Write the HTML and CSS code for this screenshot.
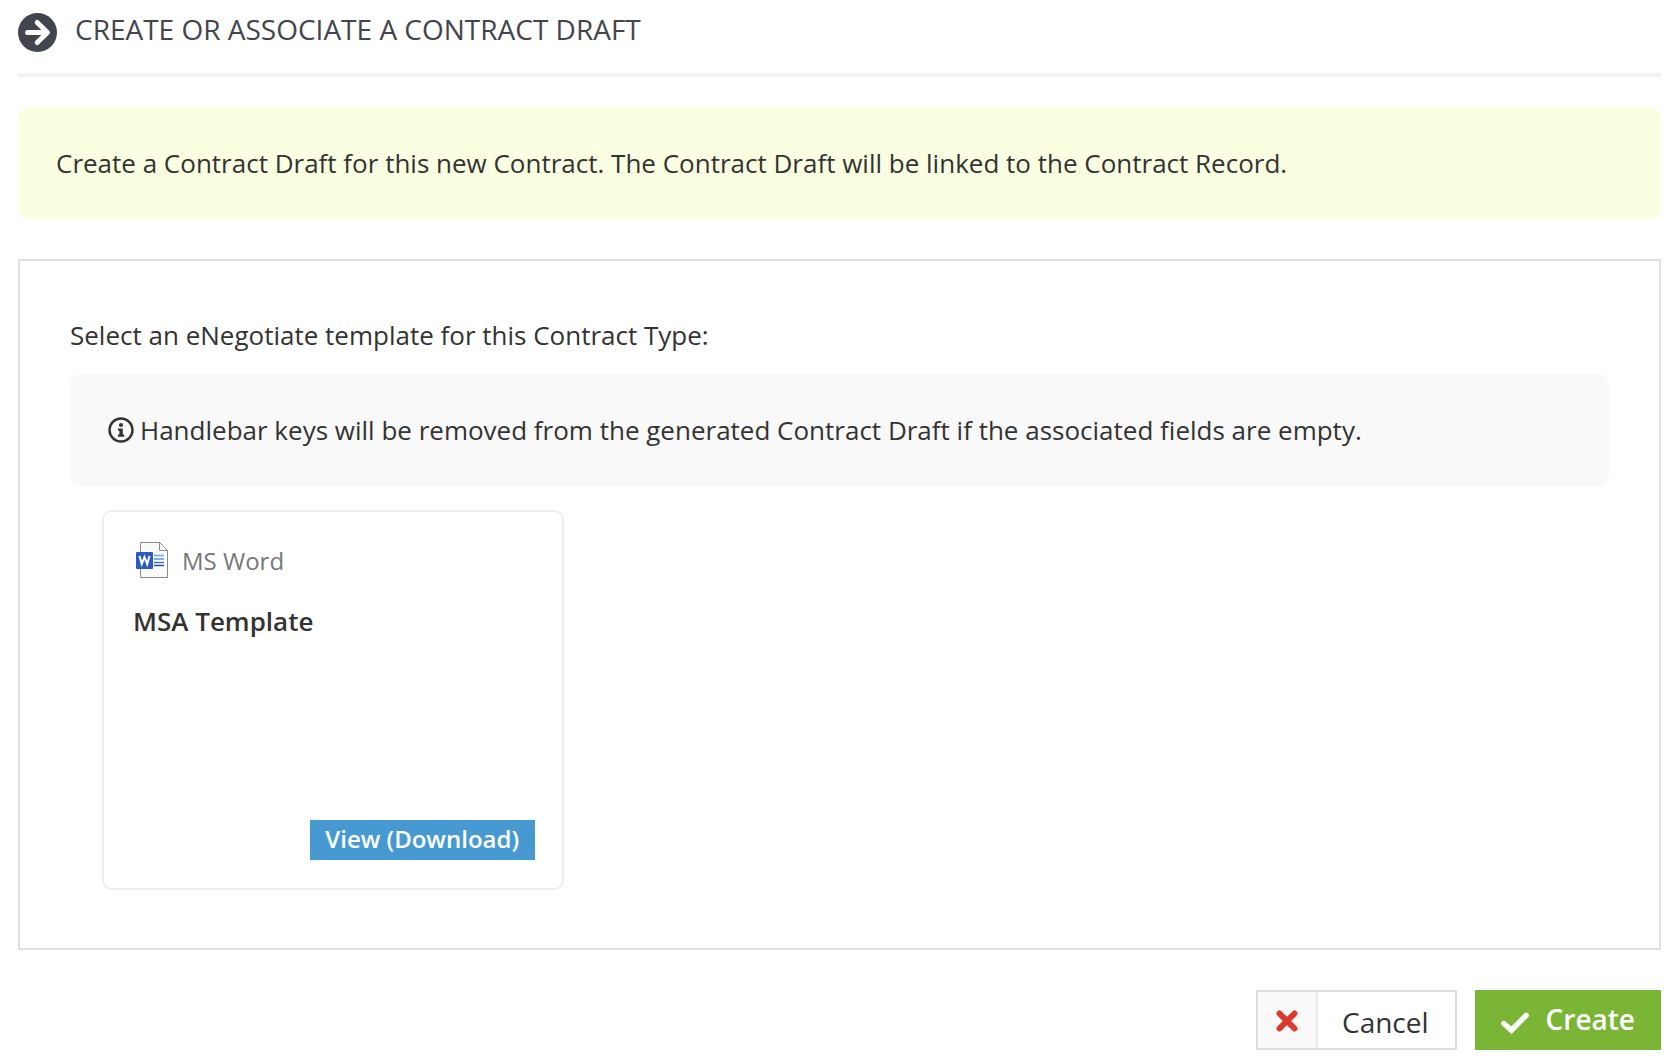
FILE: index.html
```html
<!DOCTYPE html>
<html lang="en">
<head>
<meta charset="utf-8">
<meta name="viewport" content="width=device-width, initial-scale=1">
<title>Create or Associate a Contract Draft</title>
<link rel="stylesheet" href="styles.css">
</head>
<body>
<main class="page">
  <header class="page-header">
    <svg class="header-icon" viewBox="0 0 39 39" aria-hidden="true">
      <circle cx="19.500" cy="19.500" r="19.500" fill="#42454e"/>
      <path d="M9.500 19.500H29M19.200 9.500L29.500 19.500L19.200 29.500" fill="none" stroke="#fff" stroke-width="5" stroke-linecap="round" stroke-linejoin="round"/>
    </svg>
    <h1 class="page-title">CREATE OR ASSOCIATE A CONTRACT DRAFT</h1>
  </header>

  <p class="notice notice-highlight">Create a Contract Draft for this new Contract. The Contract Draft will be linked to the Contract Record.</p>

  <section class="panel">
    <h2 class="panel-label">Select an eNegotiate template for this Contract Type:</h2>
    <p class="notice notice-info">
      <svg class="info-icon" viewBox="0 0 26 26" aria-hidden="true">
        <circle cx="13" cy="13" r="11.500" fill="none" stroke="#333" stroke-width="2.400"/>
        <circle cx="13" cy="8" r="2.100" fill="#333"/>
        <path d="M10 11.500h4.800v6h1.400v2.300h-6.200v-2.300h1.400v-3.700h-1.400z" fill="#333"/>
      </svg>
      <span>Handlebar keys will be removed from the generated Contract Draft if the associated fields are empty.</span>
    </p>

    <article class="template-card">
      <div class="file-type">
        <svg class="word-icon" viewBox="0 0 32 36" aria-hidden="true">
          <path d="M4.500 .5H23.500L31.500 8.500V35.500H4.500Z" fill="#fafafa" stroke="#8a8a8a"/>
          <path d="M23.500 .5V8.500H31.500Z" fill="#fff" stroke="#8a8a8a"/>
          <path d="M18 13.500H28" stroke="#6ba5e7" stroke-width="1.500"/>
          <path d="M18 17H28" stroke="#5a93dc" stroke-width="1.500"/>
          <path d="M18 20.500H28" stroke="#4472c4" stroke-width="1.500"/>
          <path d="M18 23.500H28" stroke="#2c4f9e" stroke-width="1.500"/>
          <rect y="10" width="17" height="17" rx="1" fill="#2b5bbd"/>
          <path d="M3.500 14L5.800 22L8.500 15L11.200 22L13.500 14" fill="none" stroke="#fff" stroke-width="2"/>
        </svg>
        <span>MS Word</span>
      </div>
      <h3 class="template-name">MSA Template</h3>
      <a class="view-link" href="#">View (Download)</a>
    </article>
  </section>

  <div class="actions">
    <button class="button button-cancel" type="button">
      <span class="cancel-mark">
        <svg class="cross-icon" viewBox="0 0 22 22" aria-hidden="true"><path d="M3.500 3.500L18.500 18.500M18.500 3.500L3.500 18.500" stroke="#dc3a2f" stroke-width="6" stroke-linecap="round"/></svg>
      </span>
      <span class="cancel-text">Cancel</span>
    </button>
    <button class="button button-create" type="button">
      <svg class="check-icon" viewBox="0 0 28 22" aria-hidden="true"><path d="M2.800 11.500L10.500 18.200L25.200 3.300" fill="none" stroke="#fff" stroke-width="5.400" stroke-linecap="round"/></svg>
      <span>Create</span>
    </button>
  </div>
</main>
</body>
</html>
```
FILE: styles.css
```css
* {
  box-sizing: border-box;
}

body {
  margin: 0;
  background: #fff;
  color: #333;
  font-family: "Open Sans", "Noto Sans", sans-serif;
  font-size: 26px;
  line-height: 36px;
}

h1,
h2,
h3,
p {
  margin: 0;
  font-size: inherit;
  font-weight: 400;
}

.page {
  padding: 10px 13px 12px 18px;
}

.page-header {
  display: flex;
  align-items: flex-start;
  gap: 18px;
  padding-bottom: 20px;
  border-bottom: 4px solid #f2f2f2;
}

.header-icon {
  flex: none;
  width: 39px;
  height: 39px;
  margin-top: 3px;
}

.page-title {
  color: #42454e;
  font-size: 28px;
  line-height: 38px;
}

.page-header {
  min-height: 67px;
}

.notice {
  padding: 38px;
  border-radius: 10px;
}

.notice-highlight {
  margin-top: 30px;
  background: #faffe1;
}

.notice-info {
  display: flex;
  align-items: center;
  gap: 6px;
  margin-top: 21px;
  background: #f9f9f9;
}

.info-icon {
  flex: none;
  width: 26px;
  height: 26px;
}

.panel {
  margin-top: 40px;
  padding: 56px 50px 58px;
  border: 2px solid #dfdfdf;
}

.template-card {
  display: flex;
  flex-direction: column;
  width: 462px;
  max-width: 100%;
  min-height: 380px;
  margin: 24px 0 0 32px;
  padding: 30px 27px 28px 29px;
  border: 2px solid #eee;
  border-radius: 10px;
}

.file-type {
  display: flex;
  align-items: flex-start;
  gap: 14px;
  padding-left: 3px;
  color: #777;
  font-size: 24px;
  line-height: 38px;
}

.word-icon {
  flex: none;
  width: 32px;
  height: 36px;
}

.template-name {
  margin-top: 23px;
  font-weight: 600;
}

.view-link {
  align-self: flex-end;
  margin-top: auto;
  padding: 0 16px 2px 15px;
  background: #479ad1;
  color: #fff;
  font-size: 24px;
  font-weight: 600;
  line-height: 38px;
  text-decoration: none;
}

.actions {
  display: flex;
  justify-content: flex-end;
  gap: 18px;
  margin-top: 40px;
}

.button {
  display: flex;
  align-items: center;
  height: 60px;
  padding: 0;
  border: 0;
  font: inherit;
  font-size: 28px;
  line-height: 38px;
  cursor: pointer;
}

.button-cancel {
  align-items: stretch;
  border: 2px solid #dcdcdc;
  background: #fff;
  color: #333;
}

.cancel-mark {
  display: flex;
  align-items: center;
  padding: 2px 18px 0;
  border-right: 2px solid #eaeaea;
  background: #f9f9f9;
}

.cross-icon {
  width: 22px;
  height: 22px;
}

.cancel-text {
  padding: 11px 26px 0 24px;
}

.button-create {
  gap: 17px;
  padding: 0 26px 2px;
  background: #7bb536;
  color: #fff;
  font-weight: 600;
}

.check-icon {
  width: 28px;
  height: 22px;
  margin-top: 8px;
}
```
